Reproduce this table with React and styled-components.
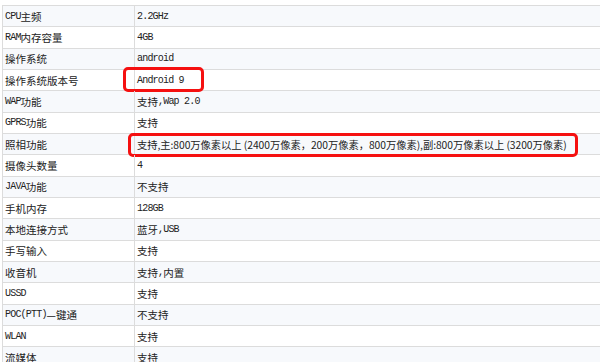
import React from 'react';
import styled, { createGlobalStyle } from 'styled-components';

const GlobalStyle = createGlobalStyle`
  html, body {
    margin: 0;
    padding: 0;
    background: #fff;
  }
  body {
    font-family: "Noto Sans CJK SC", "Liberation Sans", sans-serif;
    color: #222;
    overflow: hidden;
  }
`;

const rows = [
  { label: 'CPU主频', value: '2.2GHz' },
  { label: 'RAM内存容量', value: '4GB' },
  { label: '操作系统', value: 'android' },
  { label: '操作系统版本号', value: 'Android 9', mark: 'small' },
  { label: 'WAP功能', value: '支持,Wap 2.0' },
  { label: 'GPRS功能', value: '支持' },
  {
    label: '照相功能',
    value: '支持,主:800万像素以上 (2400万像素，200万像素，800万像素),副:800万像素以上 (3200万像素)',
    plain: true,
    mark: 'wide',
  },
  { label: '摄像头数量', value: '4' },
  { label: 'JAVA功能', value: '不支持' },
  { label: '手机内存', value: '128GB' },
  { label: '本地连接方式', value: '蓝牙,USB' },
  { label: '手写输入', value: '支持' },
  { label: '收音机', value: '支持,内置' },
  { label: 'USSD', value: '支持' },
  { label: 'POC(PTT)—键通', value: '不支持' },
  { label: 'WLAN', value: '支持' },
  { label: '流媒体', value: '支持' },
];

const Page = styled.div`
  padding: 5px 0 0 2px;
`;

const Table = styled.div`
  width: 620px;
  border-top: 1px solid #dcdcdc;
  border-left: 1px solid #dcdcdc;
`;

const Row = styled.div`
  display: grid;
  grid-template-columns: 132px 1fr;
  height: 21.33px;
  box-sizing: border-box;
  border-bottom: 1px solid #dcdcdc;
  background: ${p => (p.$shaded ? '#f7f9fc' : '#fff')};
`;

const Cell = styled.div`
  position: relative;
  display: flex;
  align-items: center;
  padding-left: 2px;
  font-size: 10.5px;
  white-space: nowrap;
  border-right: ${p => (p.$value ? 'none' : '1px solid #dcdcdc')};
`;

const Latin = styled.span`
  font-family: "Liberation Mono", monospace;
  font-size: 10px;
  letter-spacing: -0.8px;
`;

const Plain = styled.span`
  font-size: 10.3px;
  letter-spacing: -0.05px;
`;

const Mark = styled.div`
  position: absolute;
  box-sizing: border-box;
  border: 3.5px solid #f51010;
  border-radius: 5px;
  pointer-events: none;
  top: ${p => (p.$wide ? '-1px' : '-3px')};
  left: ${p => (p.$wide ? '-7px' : '-12px')};
  width: ${p => (p.$wide ? '450px' : '81px')};
  height: ${p => (p.$wide ? '24px' : '25px')};
`;

function Text({ children, plain }) {
  if (plain) return <Plain>{children}</Plain>;
  const parts = children.split(/([\x20-\x7e]+)/).filter(Boolean);
  return parts.map((part, i) =>
    /^[\x20-\x7e]+$/.test(part) ? <Latin key={i}>{part}</Latin> : <span key={i}>{part}</span>
  );
}

export default function App() {
  return (
    <>
      <GlobalStyle />
      <Page>
        <Table>
          {rows.map((r, i) => (
            <Row key={r.label} $shaded={i % 2 === 0}>
              <Cell>
                <Text>{r.label}</Text>
              </Cell>
              <Cell $value>
                <Text plain={r.plain}>{r.value}</Text>
                {r.mark && <Mark $wide={r.mark === 'wide'} />}
              </Cell>
            </Row>
          ))}
        </Table>
      </Page>
    </>
  );
}
